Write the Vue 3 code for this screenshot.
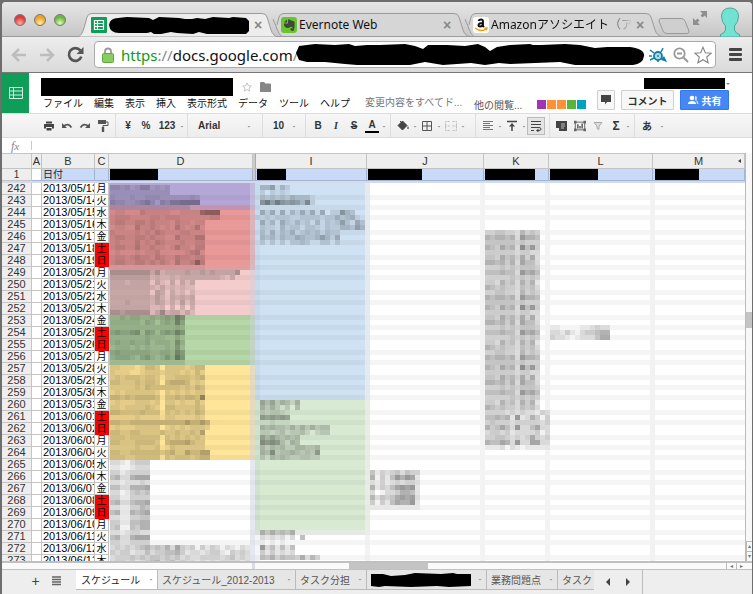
<script setup>
import { computed } from 'vue'

const menus = ['ファイル', '編集', '表示', '挿入', '表示形式', 'データ', 'ツール', 'ヘルプ']
const viewers = ['#a333b5', '#ff9036', '#ff9036', '#58b53c', '#00a3bf']

const kanji = ['月', '火', '水', '木', '金', '土', '日']
const rows = Array.from({ length: 32 }, (_, i) => {
  const d = new Date(Date.UTC(2013, 4, 13 + i))
  const day = i % 7
  return {
    num: 242 + i,
    date: d.toISOString().slice(0, 10).replace(/-/g, '/'),
    day: kanji[day],
    weekend: day > 4,
  }
})

// Coloured bands of the pixelated area: x, y, width, height, fill
const bands = [
  [109, 183, 146, 22, '#b4a7d6'], [109, 205, 146, 5, '#c99bb9'],
  [109, 210, 146, 55, '#ea9999'], [109, 265, 146, 5, '#e9a5a5'],
  [109, 270, 146, 45, '#f4cccc'], [109, 315, 146, 50, '#b6d7a8'],
  [109, 365, 146, 95, '#ffe599'],
  [255, 183, 115, 217, '#cfe2f3'], [255, 400, 115, 130, '#d9ead3'],
  [255, 530, 115, 5, '#edf2ea'],
]

// Each digit is the darkness of one 5px block
const kCycle = [
  '33443325343', '65665638665', '44444434333', '65475639584', '44444434433', '44364536362',
  '66564637553', '33343434443', '55565538675', '33333434343', '44364536462', '65454435453',
]
const kRows = Array.from({ length: 36 }, (_, i) => kCycle[i % 12]).concat([
  '3333232322132', '5565628236413', '3433323333323', '6457538335732', '3443423333412', '3344323236323', '6557638337732', '1112021011111',
])
const yRows = [
  '3322212443033332344', '3222112333233323242', '2323332332022333234', '4433343443045554232',
  '2222232433333323243', '2323333332032323233', '4434344443033434438', '2322233323033232242',
  '3323333432044333343', '4433334333032323243', '2222232222133222232', '44334444444444464464',
  '23222333330232323332', '44334433334334334360', '3332333333032323232', '44333444430455564330',
  '2222232223013222222', '44334444443453364466', '33322333330323332344',
]
const blocks = [
  { x: 110, y: 185, rows: ['443423552323', '333333333333', '322232233322222232', '544334564254667777', '2222222222222222'] },
  { x: 110, y: 210, rows: [
    '2332224333332233337888', '2333222233233322222233', '3443344343332433233', '2332253343232532352', '3222232324322233222',
    '3443344343322533355', '2322242324322232233', '3443353343323533244', '2322232334222223452', '2332343324322433233',
    '3443344343432533484', '1111111111111111111'] },
  { x: 110, y: 270, rows: [
    '66666666463444454454544446', '44444444232232333333332130', '44434444142141424', '44444444324232322', '33333333043031202',
    '44444444353143434', '33343333243131413', '44444444223030303', '66566666247344242'] },
  { x: 110, y: 315, rows: [
    '334344334345486', '444444354245485', '333333333333343', '565567365356586', '333333343332242',
    '454454453444374', '344434343334363', '454444443344375', '455543564346496', '222222222222222'] },
  { x: 110, y: 365, rows: yRows },
  { x: 110, y: 460, rows: [
    '33213444', '22112333', '33123333', '56336777', '22122232', '55336667', '33124545', '33113333', '56335667', '22113354',
    '56226567', '22113344', '44225566', '45115466', '22123322', '56336777', '33223333',
    '3434345645463743414243132132', '4344233534455642332344214343', '2333434344343423223333234232', '3443423456345343323232333323'] },
  { x: 260, y: 185, rows: ['446142', '202121', '32323243331', '79697676482'] },
  { x: 255, y: 210, rows: [
    '0525151425251502274300', '1121222112222122423410', '0524153242314132363153', '0322142331332132244364',
    '0314132412323132200000', '0434243354334642500000', '0202020223200220200000'] },
  { x: 260, y: 400, rows: ['646354250', '535313040', '323321', '767676', '112111', '54544353535344', '33234233420233', '6464343400', '87874254', '3313122', '424342244334', '548344543437', '314343223322'].filter((_, i) => i !== 9) },
  { x: 260, y: 530, rows: ['53534350', '323231305', '101010', '83525250', '4242323', '222222111'] },
  { x: 260, y: 555, rows: ['324132325253'] },
  { x: 370, y: 470, rows: ['4132342433', '6142586872', '2131232332', '6243578782', '3013346652', '5243467672', '4142576682', '1111111111'] },
  { x: 485, y: 230, rows: kRows },
  { x: 550, y: 325, rows: ['110000112322', '332421344566', '322101222466', '000000000000'] },
]

const cells = computed(() =>
  blocks.flatMap((b) =>
    b.rows.flatMap((r, j) =>
      [...r].map((c, i) => ({ x: b.x + i * 5, y: b.y + j * 5, o: Number(c) * 0.05 })).filter((c) => c.o > 0)
    )
  )
)
</script>

<template>
  <div class="window">
    <header class="chrome">
      <div class="tabstrip">
        <div class="lights"><i class="red"></i><i class="amber"></i><i class="green"></i></div>
        <div class="tab front">
          <svg class="shape" viewBox="0 0 201 24"><path d="M0 24 C4 23 5 21 7 15 L10 4 Q11 .5 15 .5 H185 Q189 .5 190 4 L194 17 Q196 23 201 24 Z" fill="#ededed" stroke="#9b9b9b" /></svg>
          <svg class="fav" viewBox="0 0 16 16"><rect width="16" height="16" rx="1" fill="#0f9d58" /><path d="M3.5 3.5h9v9h-9zM3.5 6.5h9M3.5 9.5h9M6.5 3.5v9" fill="none" stroke="#fff" stroke-width="1.2" /></svg>
          <svg class="redact" viewBox="0 0 140 17"><path d="M0 8Q1 1 9 1L18 0 40 1 44 3 50 0 70 1 76 2 83 2 88 1 96 2 104 0 120 1 124 0 137 1 140 4V14L137 17H98L90 15 84 17 68 16 62 15 52 17H45L42 15 38 16H10Q1 16 0 8Z" /></svg>
          <button class="close" aria-label="タブを閉じる">×</button>
        </div>
        <div class="tab">
          <svg class="shape" viewBox="0 0 201 24"><path d="M4 6 L8 16 Q10 22 13 23.500 H201 Q196 23 194 17 L190 4 Q189 .5 185 .5 H15 Q11 .5 10 4 L8 12" fill="#d6d6d6" stroke="#9b9b9b" /></svg>
          <svg class="fav" viewBox="0 0 16 16"><rect width="16" height="16" rx="3" fill="#69c52f" /><path d="M3 5.500 6 2.500V5.500ZM7 2.500Q9 2 10 3.500 13 3.500 13.500 5 14 9 13 13 12 14.500 10 13.500 8.500 12 10 11 11.500 11 11.500 12 12 11 11 10 9 9.500 9 10.500 6 11.500 4 10 2.500 8 3 6.500H7Z" fill="#3d4a3a" /></svg>
          <span class="name">Evernote Web</span>
          <button class="close" aria-label="タブを閉じる">×</button>
        </div>
        <div class="tab">
          <svg class="shape" viewBox="0 0 201 24"><path d="M4 6 L8 16 Q10 22 13 23.500 H201 Q196 23 194 17 L190 4 Q189 .5 185 .5 H15 Q11 .5 10 4 L8 12" fill="#d6d6d6" stroke="#9b9b9b" /></svg>
          <svg class="fav" viewBox="0 0 16 16"><rect width="16" height="16" rx="3" fill="#fff" /><path d="M5.500 4Q6 2.500 8 2.500T10 4.500V9L11 10M10 6Q5.500 6 5.500 8.200 5.500 9.500 7.200 9.500 9.500 9.300 10 7" fill="none" stroke="#111" stroke-width="1.900" /><path d="M2 11Q8 15.500 13 12M11.500 11.200 14 11 13.200 13.300" fill="none" stroke="#f90" stroke-width="1.400" /></svg>
          <span class="name fade">Amazonアソシエイト（アフ</span>
          <button class="close" aria-label="タブを閉じる">×</button>
        </div>
        <button class="newtab" aria-label="新しいタブ"><svg viewBox="0 0 32 16"><path d="M3 .5H23Q26 .5 27 3L31 13Q31 15.500 29 15.500H9Q6 15.500 5 13L1 3Q1 .5 3 .5Z" fill="#cfcfcf" stroke="#999" /></svg></button>
        <svg class="full" viewBox="0 0 16 16"><path d="M8 1H15V8L12.500 5.500 10.500 7.500 8.500 5.500 10.500 3.500ZM1 8 3.500 10.500 5.500 8.500 7.500 10.500 5.500 12.500 8 15H1Z" fill="#8e8e8e" /></svg>
        <svg class="avatar" viewBox="0 0 20 30"><path d="M10 1Q18 1 18.500 9 18.500 15 14.500 19V23Q15 26 19.500 27.500V30H.5V27.500Q5 26 5.500 23V19Q1.500 15 1.500 9 2 1 10 1Z" fill="#72e3d2" stroke="#4fa79b" /></svg>
      </div>
      <div class="nav">
        <svg class="arrow" viewBox="0 0 16 14"><path d="M8 1 2 7 8 13M2 7H15" fill="none" stroke="#bdbdbd" stroke-width="2.500" /></svg>
        <svg class="arrow" viewBox="0 0 16 14"><path d="M8 1 14 7 8 13M14 7H1" fill="none" stroke="#bdbdbd" stroke-width="2.500" /></svg>
        <svg class="reload" viewBox="0 0 16 16"><path d="M12.500 4.200A6 6 0 1 0 13.500 10" fill="none" stroke="#555" stroke-width="2.500" /><path d="M15.500 1V7.500H9Z" fill="#555" /></svg>
        <div class="omnibox">
          <svg class="lock" viewBox="0 0 12 16"><path d="M3 8V4.500Q3 1.500 6 1.500T9 4.500V8" fill="none" stroke="#999" stroke-width="1.800" /><rect x=".5" y="6.500" width="11" height="9" rx="1" fill="#86ce62" stroke="#61a845" /></svg>
          <span class="url"><b>https</b><i>://</i>docs.google.com<i>/</i></span>
          <svg class="urlblot" viewBox="0 0 350 23" preserveAspectRatio="none"><path d="M1 10 4 3 20 1 40 2 54 1 60 3 72 2 85 2 110 1 120 3 128 6 133 2 146 2 152 2 170 3 183 1 190 4 195 8 202 4 215 2 235 1 238 2 246 2 270 1 285 2 300 5 312 4 335 4Q350 6 349 13 348 21 338 22L280 22 265 19 215 21 204 20 190 22 176 20 148 22 130 19 115 22 98 22 88 22 62 22 50 21 30 19 12 19 4 17Z" /></svg>
          <svg class="ext" viewBox="0 0 18 16"><circle cx="9" cy="9" r="4" fill="#a8deea" stroke="#187da5" stroke-width="1.800" /><path d="M5 6 1 3M12 5 14 1M13 11 17 14M5 11 1 13M9 13V15M8 9h2M0 9h3" stroke="#187da5" stroke-width="1.500" /><path d="M12 13 15 9 18 15Z" fill="#187da5" /></svg>
          <svg class="glass" viewBox="0 0 16 16"><circle cx="6.500" cy="6.500" r="5.200" fill="#fff" stroke="#999" stroke-width="1.800" /><path d="M4 6.500h5M10.500 10.500 15 15" stroke="#999" stroke-width="2" /></svg>
          <svg class="star" viewBox="0 0 18 18"><path d="M9 1.200 11.300 6.700 17.200 7.200 12.700 11 14.100 16.800 9 13.700 3.900 16.800 5.300 11 .8 7.200 6.700 6.700Z" fill="#fff" stroke="#888" stroke-width="1.100" /></svg>
        </div>
        <button class="burger" aria-label="メニュー"><i></i><i></i><i></i></button>
      </div>
    </header>

    <section class="dochead">
      <a class="home" href="#" aria-label="スプレッドシート"><svg viewBox="0 0 14 12"><path d="M.5.5h13v11H.5zM.5 4h13M.5 8h13M4.500 .5v11" fill="none" stroke="#d5f0e2" /></svg></a>
      <div class="docinfo">
        <div class="titlerow">
          <span class="titleblot"></span>
          <svg class="fav-star" viewBox="0 0 10 10"><path d="M5 .8 6.200 3.700 9.300 4 7 6 7.700 9.200 5 7.500 2.300 9.200 3 6 .7 4 3.800 3.700Z" fill="none" stroke="#c4c4c4" /></svg>
          <svg class="folder" viewBox="0 0 11 10"><path d="M0 1Q0 0 1 0H4L5.500 1.500H10Q11 1.500 11 2.500V10H0Z" fill="#868686" /></svg>
          <span class="user"></span><i class="caret"></i>
        </div>
        <div class="menurow">
          <button v-for="m in menus" :key="m" class="menu">{{ m }}</button>
          <span class="saved">変更内容をすべてド...</span>
          <span class="others">他の閲覧...</span>
          <span class="viewers"><i v-for="(c, i) in viewers" :key="i" :style="{ background: c }"></i></span>
          <button class="btn chat" aria-label="チャット"><svg viewBox="0 0 10 10"><path d="M0 0H10V7H6L4 9.500V7H0Z" fill="#444" /></svg></button>
          <button class="btn comment">コメント</button>
          <button class="btn share"><svg viewBox="0 0 11 10"><circle cx="4" cy="3" r="2.300" fill="#fff" /><path d="M0 9Q0 6 4 6T8 9Z" fill="#fff" /><path d="M7 1Q9 1 9 3T8 5Q10.500 6 10.500 9H9Q9 6 7 5Z" fill="#cfe0ff" /></svg>共有</button>
        </div>
      </div>
    </section>

    <div class="toolbar">
      <div class="group g1">
        <button aria-label="印刷"><svg viewBox="0 0 12 12"><path d="M3 1.500H9V3.500H3ZM1 4H11V8.500H9V7H3V8.500H1ZM3.500 8H8.500V10.500H3.500Z" fill="#444" /></svg></button>
        <button aria-label="元に戻す"><svg viewBox="0 0 12 12"><path d="M3 6Q7 2.500 10.500 7.500" fill="none" stroke="#555" stroke-width="1.800" /><path d="M1 3V8H6Z" fill="#555" /></svg></button>
        <button aria-label="やり直す"><svg viewBox="0 0 12 12"><path d="M9 6Q5 2.500 1.500 7.500" fill="none" stroke="#555" stroke-width="1.800" /><path d="M11 3V8H6Z" fill="#555" /></svg></button>
        <button aria-label="書式のコピー"><svg viewBox="0 0 12 12"><path d="M1 0H9V4H1Z" fill="#555" /><path d="M9 2H11V5.500H6V8" fill="none" stroke="#555" /><path d="M4.800 7H7.200V12H4.800Z" fill="#555" /></svg></button>
      </div>
      <div class="group g2"><button>¥</button><button>%</button><button class="wide">123</button><i class="caret"></i></div>
      <div class="group g3"><button class="pick">Arial</button><i class="caret"></i></div>
      <div class="group g4"><button class="pick">10</button><i class="caret"></i></div>
      <div class="group g5">
        <button>B</button><button class="it">I</button><button class="st">S</button><button><span class="ink">A</span></button><i class="caret"></i>
      </div>
      <div class="group g6">
        <button aria-label="塗りつぶし"><svg viewBox="0 0 12 12"><path d="M5.500 1 10 5.500 5.500 10 1 5.500ZM3 1 6 4" fill="#444" stroke="#444" /><path d="M11 6Q12.500 9 11 9T11 6Z" fill="#444" /></svg></button><i class="caret"></i>
        <button aria-label="枠線"><svg viewBox="0 0 12 12"><path d="M1.500 1.500h9v9h-9zM6 1.500v9M1.500 6h9" fill="none" stroke="#555" /></svg></button><i class="caret"></i>
        <button aria-label="結合"><svg viewBox="0 0 12 12"><path d="M4.500 1.500h-4v9h4M7.500 1.500h4v9h-4M0 6h4.500M7.500 6H12" fill="none" stroke="#bbb" stroke-dasharray="2 1" /></svg></button><i class="caret"></i>
      </div>
      <div class="group g7">
        <button aria-label="横位置"><svg viewBox="0 0 12 12"><path d="M1 1.500h10M1 3.500h7M1 5.500h10M1 7.500h7M1 9.500h10" stroke="#777" /></svg></button><i class="caret"></i>
        <button aria-label="縦位置"><svg viewBox="0 0 12 12"><path d="M1 1.500h10M6 4v7" stroke="#444" stroke-width="1.500" /><path d="M3 6.500 6 3 9 6.500Z" fill="#444" /></svg></button><i class="caret"></i>
        <button class="on" aria-label="折り返し"><svg viewBox="0 0 12 12"><path d="M1 1.500h10M1 4.500h10M1 7.500h8Q11 7.500 11 9T9 10.500H7M1 10.500h3" fill="none" stroke="#444" /><path d="M8.500 8.500V12.500L6 10.500Z" fill="#444" /></svg></button>
      </div>
      <div class="group g8">
        <button aria-label="コメント"><svg viewBox="0 0 12 12"><path d="M0 1H11V11H3V8H0Z" fill="#444" /><path d="M5 4h4M5 6h4M5 8h3" stroke="#bbb" /></svg></button>
        <button aria-label="グラフ"><svg viewBox="0 0 14 12"><path d="M1.500 1.500h11v9h-11z" fill="none" stroke="#555" /><path d="M4.500 4v5M7 6v3M9.500 3v6" stroke="#444" stroke-width="1.500" /><path d="M0 0h3v3H0zM11 0h3v3h-3zM0 9h3v3H0zM11 9h3v3h-3z" fill="#666" /></svg></button>
        <button aria-label="フィルタ"><svg viewBox="0 0 12 12"><path d="M2 2.500H10L7 6V9.500L5 8.500V6Z" fill="#ddd" stroke="#aaa" /></svg></button>
        <button class="sum">Σ</button><i class="caret"></i>
      </div>
      <div class="group g9"><button>あ</button><i class="caret"></i></div>
    </div>

    <label class="fx"><em>f<small>x</small></em><input type="text" aria-label="数式" /></label>

    <main class="sheet">
      <div class="grid">
        <table class="head">
          <colgroup><col class="cn" /><col class="ca" /><col class="cb" /><col class="cc" /><col class="cd" /><col class="gap" /><col class="ci" /><col class="cj" /><col class="ck" /><col class="cl" /><col /></colgroup>
          <thead>
            <tr><th></th><th>A</th><th>B</th><th>C</th><th>D</th><th class="freeze"></th><th>I</th><th>J</th><th>K</th><th>L</th><th class="last">M<i></i></th></tr>
          </thead>
          <tbody>
            <tr>
              <th>1</th><td class="blank"></td><td>日付</td><td></td><td><span class="blot b1"></span></td><td class="freeze"></td><td><span class="blot b2"></span></td><td><span class="blot b3"></span></td><td><span class="blot b4"></span></td><td><span class="blot b1"></span></td><td><span class="blot b5"></span></td>
            </tr>
          </tbody>
        </table>
        <div class="freezebar"></div>
        <table class="body">
          <colgroup><col class="cn" /><col class="ca" /><col class="cb" /><col class="cc" /><col /></colgroup>
          <tbody>
            <tr v-for="(r, i) in rows" :key="r.num">
              <th>{{ r.num }}</th><td></td><td class="date">{{ r.date }}</td><td class="day" :class="{ weekend: r.weekend }">{{ r.day }}</td>
              <td v-if="i === 0" class="mosaic" :rowspan="rows.length">
                <svg width="100%" height="384" shape-rendering="crispEdges" aria-hidden="true">
                  <defs>
                    <pattern id="lines" width="60" height="60" patternUnits="userSpaceOnUse">
                      <path d="M0 0h60v5H0zM0 15h60v5H0zM0 25h60v5H0zM0 35h60v5H0zM0 50h60v5H0z" fill="#000" fill-opacity=".04" />
                    </pattern>
                  </defs>
                  <g transform="translate(-109,-183)">
                    <rect v-for="(b, k) in bands" :key="k" :x="b[0]" :y="b[1]" :width="b[2]" :height="b[3]" :fill="b[4]" />
                    <rect x="109" y="185" width="2000" height="382" fill="url(#lines)" />
                    <rect x="250" y="183" width="5" height="384" fill="#cdd2e0" fill-opacity=".5" />
                    <rect x="255" y="183" width="5" height="384" fill="#8899bb" fill-opacity=".1" />
                    <rect x="365" y="183" width="5" height="384" fill="#eee" fill-opacity=".7" />
                    <rect x="480" y="183" width="5" height="384" fill="#f3f3f3" />
                    <rect x="545" y="183" width="5" height="384" fill="#f3f3f3" />
                    <rect x="650" y="183" width="5" height="384" fill="#f2f2f2" />
                    <rect v-for="(c, k) in cells" :key="'c' + k" :x="c.x" :y="c.y" width="5" height="5" :fill-opacity="c.o" />
                  </g>
                </svg>
              </td>
            </tr>
          </tbody>
        </table>
      </div>
      <div class="vscroll"><span class="track"><i></i></span><span class="step">▴</span><span class="step">▾</span></div>
    </main>

    <div class="hscroll"><span class="fixed"></span><span class="track"><i></i></span><span class="step">◂</span><span class="step">▸</span></div>

    <footer class="tabs">
      <button class="tool" aria-label="シートを追加">+</button>
      <button class="tool list" aria-label="すべてのシート"><svg viewBox="0 0 9 10"><path d="M0 1h9M0 3.500h9M0 6h9M0 8.500h9" stroke="#666" stroke-width="1.700" /></svg></button>
      <button class="sheettab current t1">スケジュール<i class="caret"></i></button>
      <button class="sheettab t2">スケジュール_2012-2013<i class="caret"></i></button>
      <button class="sheettab t3">タスク分担<i class="caret"></i></button>
      <button class="sheettab t4" aria-label="シート"><svg viewBox="0 0 100 14"><path d="M0 1H12L20 3 34 2 44 0 70 1 82 0 86 1 100 1V13L78 14 66 13 40 14 14 13 8 14 0 13Z" /></svg><i class="caret"></i></button>
      <button class="sheettab t3">業務問題点<i class="caret"></i></button>
      <button class="sheettab t6">タスク</button>
      <div class="pager"><button aria-label="前へ"><i class="prev"></i></button><button aria-label="次へ"><i class="next"></i></button></div>
    </footer>
  </div>
</template>

<style>
html, body, #app { height: 100%; }
body { margin: 0; background: #6e6e6e; }
</style>

<style scoped>
* { box-sizing: border-box; }
button { border: 0; margin: 0; padding: 0; background: none; font: inherit; color: inherit; flex: none; }
svg { display: block; flex: none; }
.window { height: 100%; display: flex; flex-direction: column; padding: 2px 1px 0 2px; overflow: hidden; font-family: "Liberation Sans", "Noto Sans CJK JP", sans-serif; font-size: 10px; color: #222; }
.caret { flex: none; width: 4px; height: 2px; background: #999; clip-path: polygon(0 0, 100% 0, 50% 100%); }

.chrome { flex: none; border-bottom: 1px solid #777; background: #e4e4e4; border-radius: 4px 4px 0 0; overflow: hidden; }
.tabstrip { height: 35px; display: flex; align-items: flex-end; background: linear-gradient(#e6e6e6, #c6c6c6); box-shadow: inset 0 -1px #9b9b9b; }
.lights { width: 75px; height: 35px; padding: 0 0 0 12px; display: flex; gap: 8px; align-items: center; flex: none; }
.lights i { width: 12px; height: 12px; border-radius: 50%; border: 1px solid #777; }
.red { background: radial-gradient(circle at 50% 80%, #ffb0a8, #df3a3c 60%); }
.amber { background: radial-gradient(circle at 50% 80%, #fff0a0, #efa028 60%); }
.green { background: radial-gradient(circle at 50% 80%, #dcffb8, #6fb542 60%); }
.tab { position: relative; flex: none; width: 201px; height: 24px; margin-right: -9px; padding: 0 16px 0 12px; display: flex; align-items: center; gap: 2px; }
.tab.front { z-index: 1; padding-left: 14px; }
.shape { position: absolute; left: 0; top: 0; width: 201px; height: 24px; }
.fav { position: relative; width: 16px; height: 16px; }
.redact { position: relative; width: 140px; height: 17px; }
.name { position: relative; flex: none; white-space: nowrap; color: #111; font: 12px/18px "Noto Sans", "Noto Sans CJK JP", sans-serif; }
.fade { width: 140px; overflow: hidden; mask-image: linear-gradient(90deg, #000 112px, transparent 142px); }
.close { position: relative; margin-left: auto; width: 14px; font-size: 14px; line-height: 14px; font-weight: bold; color: #888; }
.newtab { margin: 0 0 3px 5px; }
.newtab svg { width: 32px; height: 16px; }
.full { width: 16px; height: 16px; margin: 0 0 11px 2px; }
.avatar { width: 20px; height: 30px; margin: 0 12px 0 auto; }
.nav { height: 35px; display: flex; align-items: center; padding: 0 10px 0 9px; background: linear-gradient(#ededed, #dadada); }
.arrow { width: 16px; height: 14px; margin-right: 12px; }
.reload { width: 17px; height: 17px; margin-right: 10px; }
.omnibox { flex: 1; min-width: 0; height: 27px; padding: 0 3px 0 7px; display: flex; align-items: center; background: #fff; border: 1px solid #aaa; border-radius: 4px; }
.lock { width: 12px; height: 16px; margin-right: 7px; }
.url { font: 15px/20px "Noto Sans", sans-serif; color: #111; white-space: nowrap; flex: none; width: 174px; }
.url b { font-weight: normal; color: #149a14; }
.url i { font-style: normal; color: #888; }
.urlblot { flex: 1; min-width: 0; height: 23px; }
.ext { width: 18px; height: 16px; margin: 0 6px 0 4px; }
.glass { width: 16px; height: 16px; margin-right: 5px; }
.star { width: 18px; height: 18px; }
.burger { width: 13px; margin-left: 13px; display: flex; flex-direction: column; gap: 2px; }
.burger i { height: 3px; background: #444; border-radius: 1px; }

.dochead { flex: none; height: 40px; display: flex; background: #fff; }
.home { width: 27px; background: #0f9d58; display: flex; align-items: center; justify-content: center; flex: none; }
.home svg { width: 14px; height: 12px; }
.docinfo { flex: 1; min-width: 0; padding: 5px 0 0 12px; }
.titlerow { height: 18px; display: flex; align-items: center; padding-right: 22px; }
.titleblot { width: 192px; height: 18px; background: #000; margin-right: 9px; }
.fav-star { width: 10px; height: 10px; margin-right: 8px; }
.folder { width: 11px; height: 10px; }
.user { width: 81px; height: 11px; margin: 0 1px 8px auto; background: #000; }
.titlerow .caret { margin-bottom: 6px; background: #888; }
.menurow { height: 16px; display: flex; align-items: center; gap: 11px; padding: 0 28px 0 2px; white-space: nowrap; }
.menu { line-height: 14px; color: #111; }
.saved { color: #777; margin: 0 -3px 6px 4px; width: 101px; flex: none; }
.others { color: #555; width: 52px; flex: none; }
.viewers { display: flex; gap: 1px; flex: none; margin-right: auto; }
.viewers i { width: 9px; height: 9px; }
.btn { height: 20px; margin: -8px -5px 0 0; border: 1px solid #d0d0d0; background: #f7f7f7; border-radius: 1px; font-weight: bold; color: #333; display: flex; align-items: center; justify-content: center; gap: 3px; }
.chat { width: 18px; }
.chat svg { width: 10px; height: 10px; }
.comment { width: 53px; }
.share { width: 49px; margin-right: 0; background: #4787f5; border-color: #3079ed; color: #fff; }
.share svg { width: 11px; height: 10px; }

.toolbar { flex: none; height: 25px; display: flex; background: linear-gradient(#f7f7f7, #ededed); border: solid #ddd; border-width: 1px 0; font-weight: bold; color: #333; }
.group { display: flex; align-items: center; border-right: 1px solid #ddd; flex: none; padding-left: 3px; }
.group button { width: 18px; height: 18px; display: flex; align-items: center; justify-content: center; }
.group svg { width: 12px; height: 12px; }
.group .caret { margin: 2px 1px 0; }
.g1 { width: 114px; padding-left: 38px; }
.g2 { width: 72px; }
.group .wide { width: 24px; }
.g3 { width: 75px; padding: 0 10px; justify-content: space-between; }
.g4 { width: 43px; padding: 0 8px 0 10px; justify-content: space-between; }
.group .pick { width: auto; }
.g5 { width: 85px; }
.g6 { width: 85px; }
.g7 { width: 74px; }
.g8 { width: 85px; }
.g9 { border-right: 0; }
.g9 .caret { margin-left: 4px; }
.it { font-style: italic; font-family: "Liberation Serif", serif; }
.st { text-decoration: line-through; }
.ink { border-bottom: 2px solid #000; padding: 0 3px; line-height: 12px; }
.group .on { border: 1px solid #bbb; background: #e4e4e4; }
.sum { font-size: 12px; }

.fx { flex: none; height: 15px; display: flex; align-items: center; background: #fff; padding-left: 9px; color: #888; }
.fx em { font: italic 12px/14px "Liberation Serif", serif; width: 20px; }
.fx small { font-size: 11px; }
.fx input { flex: 1; height: 9px; border: 0; border-left: 1px solid #d8c8b0; padding: 0 2px; font-size: 10px; outline: 0; min-width: 0; }

.sheet { flex: 1; min-height: 0; display: flex; background: #fff; }
.grid { flex: 1; min-width: 0; overflow: hidden; }
table { width: 100%; table-layout: fixed; border-collapse: separate; border-spacing: 0; }
.cn { width: 30px; } .ca { width: 10px; } .cb { width: 53px; } .cc { width: 14px; } .cd { width: 144px; }
.gap { width: 3px; } .ci { width: 111px; } .cj { width: 117px; } .ck { width: 65px; } .cl { width: 104px; }
th, td { padding: 0; overflow: hidden; white-space: nowrap; font-weight: normal; border: solid #c4c4c4; border-width: 0 1px 1px 0; line-height: 11px; height: 12px; }
th { background: #eee; color: #333; text-align: center; }
.head thead th { height: 16px; border-top: 1px solid #c4c4c4; font-size: 11px; line-height: 14px; }
.head td { background: #c9daf8; border-color: #a4b4d4; padding-left: 1px; }
.head .blank { background: #fff; }
.head .freeze { background: #ccc; padding: 0; border-right: 1px solid #aaa; }
.last i { float: right; margin: 5px 3px 0 -8px; border: solid transparent; border-width: 2px 3px 2px 0; border-right-color: #444; }
.blot { display: block; height: 11px; background: #000; }
.b1 { width: 48px; } .b2 { width: 29px; } .b3 { width: 54px; } .b4 { width: 50px; } .b5 { width: 44px; margin-left: 1px; }
.freezebar { height: 2px; background: #d5daea; }
.body th { font-size: 11px; }
.date { font-size: 11px; color: #000; padding-left: 1px; text-overflow: clip; }
.day { text-align: center; font-size: 10px; color: #000; }
.day.weekend { background: #f00; border-color: #e00; }
.body .mosaic { border: 0; vertical-align: top; }
.vscroll { width: 7px; flex: none; border-left: 1px solid #bbb; background: #f8f8f8; display: flex; flex-direction: column; }
.vscroll .track { flex: 1; padding-top: 159px; }
.vscroll .track i { display: block; height: 16px; background: #c4c4c4; }
.step { border: solid #bbb; border-width: 1px 0 0 1px; color: #777; font-size: 6px; line-height: 9px; text-align: center; height: 10px; flex: none; }
.hscroll { flex: none; height: 9px; border: solid #c0c0c0; border-width: 2px 0 1px; background: #fafafa; display: flex; }
.hscroll .fixed { width: 253px; border-right: 3px solid #d8dae4; flex: none; }
.hscroll .track { flex: 1; padding-left: 94px; }
.hscroll .track i { display: block; width: 79px; height: 6px; background: #c4c4c4; }
.hscroll .step { width: 10px; height: 6px; line-height: 6px; border-top: 0; }
.hscroll .step:last-child { margin-right: 6px; }

.tabs { flex: none; height: 24px; display: flex; align-items: flex-start; background: #eee; padding-left: 24px; }
.tool { width: 19px; height: 22px; font-size: 14px; line-height: 22px; color: #444; text-align: center; }
.list { width: 31px; padding: 0 0 0 7px; display: flex; align-items: center; }
.list svg { width: 9px; height: 10px; }
.sheettab { height: 20px; border: solid #bbb; border-width: 0 1px 1px 0; background: #e6e6e6; color: #555; display: flex; align-items: center; justify-content: space-between; padding: 0 4px; white-space: nowrap; overflow: hidden; }
.current { background: #fff; color: #222; }
.t1 { width: 82px; padding-left: 5px; } .t2 { width: 138px; } .t3 { width: 71px; } .t4 { width: 120px; } .t6 { width: 36px; border-right: 0; }
.t4 svg { width: 100px; height: 14px; }
.pager { width: 49px; height: 24px; border-right: 1px solid #bbb; display: flex; align-items: center; justify-content: center; gap: 16px; flex: none; background: #eee; }
.pager i { display: block; border: solid transparent; border-width: 4px 0; }
.pager .prev { border-right: 4px solid #444; }
.pager .next { border-left: 4px solid #444; }
</style>
